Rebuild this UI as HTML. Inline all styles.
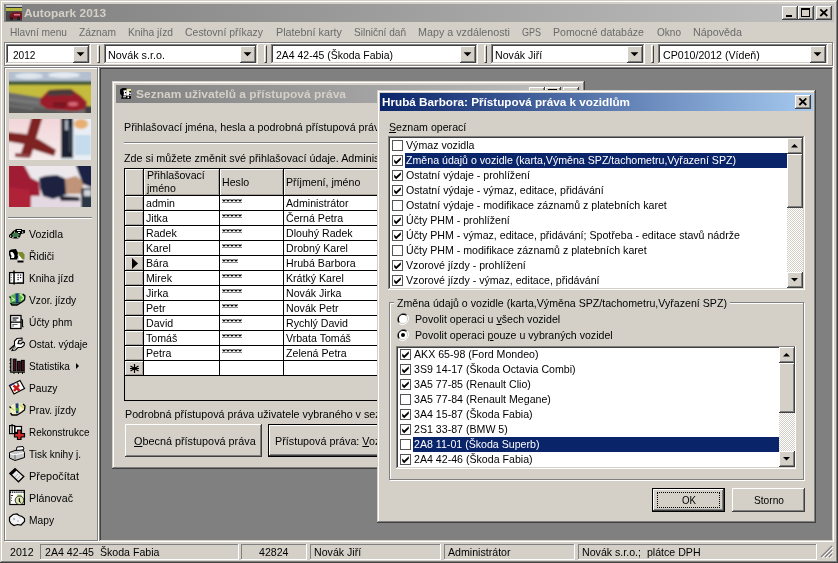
<!DOCTYPE html><html><head><meta charset="utf-8"><style>
*{margin:0;padding:0;box-sizing:border-box}
html,body{width:838px;height:563px;overflow:hidden;background:#d4d0c8}
body{position:relative;font-family:"Liberation Sans", sans-serif;font-size:11px;color:#000}
div,svg{position:absolute}
.t{white-space:pre;line-height:13px;transform-origin:0 0}
.raised{background:#d4d0c8;box-shadow:inset -1px -1px #404040,inset 1px 1px #fff,inset -2px -2px #808080,inset 2px 2px #d4d0c8}
.win{background:#d4d0c8;box-shadow:inset -1px -1px #404040,inset 1px 1px #d4d0c8,inset -2px -2px #808080,inset 2px 2px #fff}
.sunken{box-shadow:inset -1px -1px #fff,inset 1px 1px #808080,inset -2px -2px #d4d0c8,inset 2px 2px #404040}
.thin{box-shadow:inset -1px -1px #fff,inset 1px 1px #808080}
.etch{border:1px solid #808080;box-shadow:1px 1px #fff,inset 1px 1px #fff}
.ul{text-decoration:underline}
</style></head><body><div class="win" style="left:0px;top:0px;width:838px;height:563px;"></div>
<div class="" style="left:4px;top:4px;width:830px;height:18px;background:linear-gradient(to right,#808080,#c0c0c0)"></div>
<svg style="left:6px;top:5px" width="16" height="16"><rect width="16" height="16" fill="#404040"/><rect width="16" height="2" fill="#c4c8d0"/><rect y="2" width="16" height="1" fill="#303030"/><rect y="3" width="16" height="3" fill="#b4b440"/><rect y="6" width="16" height="10" fill="#484848"/><path d="M3 11 L6 7.5 L12 7 L16 8 L16 14 L6 14 L3 13Z" fill="#7a1420"/><rect x="8" y="9" width="6" height="1.5" fill="#d88090"/><rect x="4" y="12" width="3" height="3" fill="#202020"/><rect x="11" y="12" width="3" height="3" fill="#202020"/></svg>
<div class="t" style="left:24px;top:7px;font-size:11px;font-weight:bold;transform:scaleX(1.0816);color:#d4d0c8">Autopark 2013</div>
<div class="raised" style="left:782px;top:6px;width:16px;height:14px;"><svg style="left:0;top:0" width="16" height="14"><rect x="4" y="9" width="6" height="2" fill="#000"/></svg></div>
<div class="raised" style="left:798px;top:6px;width:16px;height:14px;"><svg style="left:0;top:0" width="16" height="14"><rect x="3.5" y="2.5" width="8" height="8" fill="none" stroke="#000"/><rect x="3" y="2" width="9" height="2" fill="#000"/></svg></div>
<div class="raised" style="left:816px;top:6px;width:16px;height:14px;"><svg style="left:0;top:0" width="16" height="14"><path d="M4.3 3.3 L11.3 10 M11.3 3.3 L4.3 10" stroke="#000" stroke-width="1.8"/></svg></div>
<div class="t" style="left:10px;top:26px;font-size:11.5px;transform:scaleX(0.8829);color:#6a6a6a">Hlavní menu</div>
<div class="t" style="left:79px;top:26px;font-size:11.5px;transform:scaleX(0.8906);color:#6a6a6a">Záznam</div>
<div class="t" style="left:128px;top:26px;font-size:11.5px;transform:scaleX(0.8908);color:#6a6a6a">Kniha jízd</div>
<div class="t" style="left:185px;top:26px;font-size:11.5px;transform:scaleX(0.9106);color:#6a6a6a">Cestovní příkazy</div>
<div class="t" style="left:276px;top:26px;font-size:11.5px;transform:scaleX(0.9385);color:#6a6a6a">Platební karty</div>
<div class="t" style="left:354px;top:26px;font-size:11.5px;transform:scaleX(0.8744);color:#6a6a6a">Silniční daň</div>
<div class="t" style="left:418px;top:26px;font-size:11.5px;transform:scaleX(0.9345);color:#6a6a6a">Mapy a vzdálenosti</div>
<div class="t" style="left:522px;top:26px;font-size:11.5px;transform:scaleX(0.7820);color:#6a6a6a">GPS</div>
<div class="t" style="left:553px;top:26px;font-size:11.5px;transform:scaleX(0.9182);color:#6a6a6a">Pomocné databáze</div>
<div class="t" style="left:657px;top:26px;font-size:11.5px;transform:scaleX(0.8727);color:#6a6a6a">Okno</div>
<div class="t" style="left:693px;top:26px;font-size:11.5px;transform:scaleX(0.9344);color:#6a6a6a">Nápověda</div>
<div class="" style="left:4px;top:42px;width:829px;height:24px;border:1px solid #808080;box-shadow:1px 1px #fff,inset 1px 1px #fff"></div>
<div class="sunken" style="left:6px;top:44px;width:85px;height:20px;background:#fff"></div>
<div class="t" style="left:13px;top:49px;font-size:11.5px;transform:scaleX(0.8791);">2012</div>
<div class="raised" style="left:73px;top:46px;width:16px;height:17px;"><svg style="left:0;top:0" width="16" height="16"><path d="M3.6 6.2 H11.4 L7.5 10.2Z" fill="#000"/></svg></div>
<div class="" style="left:97px;top:45px;width:3px;height:18px;border-left:1px solid #fff;border-right:1px solid #404040;border-top:1px solid #fff;border-bottom:1px solid #404040"></div>
<div class="sunken" style="left:104px;top:44px;width:154px;height:20px;background:#fff"></div>
<div class="t" style="left:108px;top:49px;font-size:11.5px;transform:scaleX(0.9388);">Novák s.r.o.</div>
<div class="raised" style="left:240px;top:46px;width:16px;height:17px;"><svg style="left:0;top:0" width="16" height="16"><path d="M3.6 6.2 H11.4 L7.5 10.2Z" fill="#000"/></svg></div>
<div class="" style="left:264px;top:45px;width:3px;height:18px;border-left:1px solid #fff;border-right:1px solid #404040;border-top:1px solid #fff;border-bottom:1px solid #404040"></div>
<div class="sunken" style="left:271px;top:44px;width:207px;height:20px;background:#fff"></div>
<div class="t" style="left:276px;top:49px;font-size:11.5px;transform:scaleX(0.9105);">2A4 42-45 (Škoda Fabia)</div>
<div class="raised" style="left:460px;top:46px;width:16px;height:17px;"><svg style="left:0;top:0" width="16" height="16"><path d="M3.6 6.2 H11.4 L7.5 10.2Z" fill="#000"/></svg></div>
<div class="" style="left:484px;top:45px;width:3px;height:18px;border-left:1px solid #fff;border-right:1px solid #404040;border-top:1px solid #fff;border-bottom:1px solid #404040"></div>
<div class="sunken" style="left:491px;top:44px;width:154px;height:20px;background:#fff"></div>
<div class="t" style="left:495px;top:49px;font-size:11.5px;transform:scaleX(0.9230);">Novák Jiří</div>
<div class="raised" style="left:627px;top:46px;width:16px;height:17px;"><svg style="left:0;top:0" width="16" height="16"><path d="M3.6 6.2 H11.4 L7.5 10.2Z" fill="#000"/></svg></div>
<div class="" style="left:651px;top:45px;width:3px;height:18px;border-left:1px solid #fff;border-right:1px solid #404040;border-top:1px solid #fff;border-bottom:1px solid #404040"></div>
<div class="sunken" style="left:658px;top:44px;width:170px;height:20px;background:#fff"></div>
<div class="t" style="left:663px;top:49px;font-size:11.5px;transform:scaleX(0.9230);">CP010/2012 (Vídeň)</div>
<div class="raised" style="left:810px;top:46px;width:16px;height:17px;"><svg style="left:0;top:0" width="16" height="16"><path d="M3.6 6.2 H11.4 L7.5 10.2Z" fill="#000"/></svg></div>
<div class="etch" style="left:4px;top:67px;width:94px;height:474px;"></div>
<div style="left:9px;top:72px;width:82px;height:41px;overflow:hidden"><svg style="left:0;top:0" width="82" height="41">
<defs><filter id="bl"><feGaussianBlur stdDeviation="0.9"/></filter></defs>
<g filter="url(#bl)"><rect x="-3" y="-3" width="88" height="12" fill="#b4c0d0"/><ellipse cx="20" cy="4" rx="14" ry="3" fill="#dfe6ee"/><ellipse cx="55" cy="3" rx="16" ry="3" fill="#e4eaf0"/>
<rect x="-3" y="9" width="88" height="5" fill="#3c5834"/><rect x="-3" y="13" width="88" height="30" fill="#c4bc3c"/>
<path d="M-3 20 L40 27 L84 36 L84 44 L-3 44Z" fill="#6c6c6c"/><path d="M-3 30 L30 36 L84 44 L-3 44Z" fill="#585858"/>
<path d="M-3 27 L30 31 M-3 33 L25 37" stroke="#8a8a8a" stroke-width="1.2"/><path d="M31 27 L40 18 L62 17 L72 24 L78 30 L77 37 L66 39 L38 37 L31 32Z" fill="#9a1c2a"/><path d="M40 18 L62 17 L66 23 L38 24Z" fill="#4a3a3a"/><ellipse cx="64" cy="32" rx="5" ry="2" fill="#d86878"/><path d="M44 30 L58 30 L56 36 L44 35Z" fill="#7a1420"/><rect x="76" y="34" width="8" height="8" fill="#404040"/></g>
</svg></div>
<div style="left:9px;top:119px;width:82px;height:41px;overflow:hidden"><svg style="left:0;top:0" width="82" height="41">
<defs><linearGradient id="pk" x1="0" y1="0" x2="0" y2="1"><stop offset="0" stop-color="#f2d4d8"/><stop offset="1" stop-color="#f6eeee"/></linearGradient></defs>
<g filter="url(#bl)"><rect x="-3" y="-3" width="56" height="48" fill="url(#pk)"/><rect x="52" y="-3" width="32" height="48" fill="#e8eef4"/>
<path d="M23 -3 L34 -3 L27 20 L22 37 L11 37 L17 19Z" fill="#7e2424"/><path d="M-3 13 L16 15 L25 18 L26 25 L14 25 L-3 22Z" fill="#7e2424"/><path d="M19 18 L29 20 L47 31 L45 37 L20 29Z" fill="#7e2424"/><path d="M6 34 L22 35 L21 39 L6 38Z" fill="#904040"/>
<rect x="52" y="-3" width="13" height="48" fill="#dde4ea"/><rect x="52" y="-3" width="12" height="42" fill="#1c2230"/><rect x="56" y="1" width="3" height="10" fill="#a8b0bc"/><rect x="60" y="8" width="2" height="25" fill="#3a4a58"/>
<ellipse cx="72" cy="5" rx="7" ry="5" fill="#e8b070"/><rect x="66" y="16" width="16" height="20" fill="#c4dcec"/></g>
</svg></div>
<div style="left:9px;top:166px;width:82px;height:41px;overflow:hidden"><svg style="left:0;top:0" width="82" height="41">
<g filter="url(#bl)"><rect x="-3" y="-3" width="88" height="48" fill="#ece8ec"/><path d="M-3 -3 L14 -3 L22 12 L30 16 L32 44 L-3 44Z" fill="#a01a34"/><path d="M-3 20 L20 24 L22 44 L-3 44Z" fill="#b02038"/>
<path d="M22 30 L70 30 L70 44 L22 44Z" fill="#e4d8e2"/>
<path d="M30 12 L36 10 L48 9 L57 13 L59 28 L44 33 L34 30 L31 22Z" fill="#1a2040"/><path d="M50 30 L70 31 L71 35 L52 35Z" fill="#202030"/>
<path d="M56 13 L67 10 L75 16 L72 28 L57 28Z" fill="#c09478"/><path d="M66 -3 L84 -3 L84 22 L74 18 L70 8Z" fill="#1c2444"/><rect x="72" y="22" width="12" height="22" fill="#2c3444"/><rect x="75" y="24" width="7" height="6" fill="#d0d4dc"/></g>
</svg></div>
<div class="" style="left:8px;top:217px;width:84px;height:2px;border-top:1px solid #808080;border-bottom:1px solid #fff"></div>
<div class="t" style="left:29px;top:228px;font-size:11.5px;transform:scaleX(0.9166);">Vozidla</div>
<svg style="left:6px;top:224px" width="22" height="22" viewBox="0 0 22 22"><path d="M3 11 L5 9.5 L7 7 L9 6 L10 5 L16 5 L16 6 L19 6 L19 9 L15 10 L14 13 L12 14.5 L8 14.5 L5 14 L3 13Z" fill="#000"/>
<path d="M6 10.5 L8 8.5 L11 8.5 L13 10 L12 13 L7 13Z" fill="#3e7a4c"/><rect x="11" y="6" width="4" height="1" fill="#fff"/><rect x="12" y="8" width="2" height="1" fill="#fff"/><rect x="4" y="11.5" width="1.2" height="1.2" fill="#fff"/><rect x="6.3" y="12.8" width="1.2" height="1.2" fill="#fff"/><rect x="11.3" y="12.8" width="1.2" height="1.2" fill="#fff"/><rect x="16" y="7.5" width="1.2" height="1.2" fill="#fff"/><rect x="8" y="7.6" width="1" height="1" fill="#fff"/><rect x="12.5" y="10.5" width="1" height="1" fill="#9fd0a0"/></svg>
<div class="t" style="left:29px;top:250px;font-size:11.5px;transform:scaleX(0.8900);">Řidiči</div>
<svg style="left:6px;top:246px" width="22" height="22" viewBox="0 0 22 22"><path d="M3 5 L5 3.5 L10 3 L11 5 L12 7 L11.5 9 L12 11 L11 13.5 L4 13.5 L4 11 L3 9Z" fill="#000"/>
<path d="M4.5 6 L6.5 6 L8 8 L8.5 10 L8 12 L5 12 L5.5 10 L4.5 8Z" fill="#fff"/>
<path d="M12 6 L16.5 6 L18.5 8.5 L18.5 13.5 L16 13 L13 9Z" fill="#7c8a2c"/><path d="M13 9.5 L16 13 L17 15 L12 15 L13 12Z" fill="#fff"/><rect x="11.5" y="14.5" width="6" height="2" fill="#000"/></svg>
<div class="t" style="left:29px;top:272px;font-size:11.5px;transform:scaleX(0.8908);">Kniha jízd</div>
<svg style="left:6px;top:268px" width="22" height="22" viewBox="0 0 22 22"><rect x="3.6" y="4.6" width="13.8" height="10.6" fill="#fff" stroke="#000" stroke-width="1.3"/><rect x="7.3" y="2.5" width="1.5" height="14" fill="#000"/>
<rect x="11.5" y="6.5" width="1.2" height="1.2" fill="#000"/><rect x="14" y="6.5" width="1.2" height="1.2" fill="#000"/><rect x="11.5" y="9" width="1.2" height="1.2" fill="#000"/><rect x="14" y="9" width="1.2" height="1.2" fill="#000"/><rect x="11.5" y="11" width="1.2" height="1.2" fill="#000"/><rect x="11" y="14" width="6" height="1" fill="#444"/><path d="M4.5 7 H6 M4.5 9.5 H6 M4.5 12 H6" stroke="#888"/></svg>
<div class="t" style="left:29px;top:294px;font-size:11.5px;transform:scaleX(0.8900);">Vzor. jízdy</div>
<svg style="left:6px;top:290px" width="22" height="22" viewBox="0 0 22 22"><path d="M3.5 6.5 L6 5 L9 3.5 L13 3 L17 4 L19 6 L18.5 10 L16 12 L11 15 L6 15 L4.5 13 L4 9Z" fill="#58b048"/><path d="M4 6.5 L8.5 9.5 L6 11 M14 4 L18 8 L15 10" stroke="#c8f0b0" stroke-width="1.3" fill="none"/><path d="M9.5 3.5 L12.5 3.2 L12.5 13 L10 13.5Z" fill="#1a3a8a"/><path d="M17 4 L19 6 L18.5 10 L16 12 L11 15 L6 15 L4.5 13 M3.5 6.5 L5 8" stroke="#000" stroke-width="1.3" fill="none"/><path d="M6 13 L14 12.5" stroke="#1a2a5a" stroke-width="1.2"/></svg>
<div class="t" style="left:29px;top:316px;font-size:11.5px;transform:scaleX(0.8900);">Účty phm</div>
<svg style="left:6px;top:312px" width="22" height="22" viewBox="0 0 22 22"><rect x="4.6" y="3.5" width="10.4" height="13" fill="#fff" stroke="#000" stroke-width="1.3"/><rect x="4" y="9.5" width="11.5" height="1.3" fill="#000"/><rect x="6.5" y="5.5" width="6" height="1.1" fill="#000"/><rect x="6.5" y="7.5" width="4" height="1" fill="#000"/><rect x="6.5" y="12" width="5" height="1" fill="#666"/><rect x="6.5" y="12" width="1" height="3" fill="#666"/><path d="M15 7 L16.5 8 L16.5 14.5 L17.5 15" stroke="#000" stroke-width="1.1" fill="none"/></svg>
<div class="t" style="left:29px;top:338px;font-size:11.5px;transform:scaleX(0.8730);">Ostat. výdaje</div>
<svg style="left:6px;top:334px" width="22" height="22" viewBox="0 0 22 22"><path d="M11 4.5 L16 4 L16 6 L13 6.5 L12 9.5 L15 10 L17 8 L18.5 9 L18 11.5 L15.5 13.5 L12 13.5 L9.5 16 L6 16.5 L8.5 12 L8.5 7 Z" fill="#fff" stroke="#000" stroke-width="1.1"/><path d="M3.5 15.5 L8.5 11" stroke="#000" stroke-width="1.2"/><path d="M7 15.5 L10 12.5" stroke="#999" stroke-width="2"/></svg>
<div class="t" style="left:29px;top:360px;font-size:11.5px;transform:scaleX(0.8785);">Statistika</div>
<svg style="left:6px;top:356px" width="22" height="22" viewBox="0 0 22 22"><path d="M4.8 2 V16.2 H19" stroke="#000" stroke-width="1.3" fill="none"/><path d="M3.5 4 H5 M3.5 7.5 H5 M3.5 11 H5 M3.5 14.5 H5 M8 16 V18 M12.5 16 V18 M16.5 16 V18" stroke="#000" stroke-width="0.9"/>
<rect x="7.2" y="3.2" width="2.8" height="11.6" fill="#4a1020" stroke="#000" stroke-width="1.1"/><rect x="11.4" y="5.4" width="2.8" height="9.4" fill="#4a1020" stroke="#000" stroke-width="1.1"/><rect x="15.4" y="4.4" width="2.8" height="10.4" fill="#4a1020" stroke="#000" stroke-width="1.1"/></svg>
<div class="t" style="left:29px;top:382px;font-size:11.5px;transform:scaleX(0.8900);">Pauzy</div>
<svg style="left:6px;top:378px" width="22" height="22" viewBox="0 0 22 22"><path d="M3.5 7.5 L14 2.5 L18.5 10.5 L8 16Z" fill="#fff" stroke="#000" stroke-width="1.2"/><path d="M7.5 7.5 L13.5 12.5 M13 7 L8 13" stroke="#c81818" stroke-width="2.6"/><path d="M4 7.5 L8 5.5" stroke="#302070" stroke-width="1.5"/><path d="M11 4.5 L12.5 7" stroke="#6a4020" stroke-width="1.5"/></svg>
<div class="t" style="left:29px;top:404px;font-size:11.5px;transform:scaleX(0.8900);">Prav. jízdy</div>
<svg style="left:6px;top:400px" width="22" height="22" viewBox="0 0 22 22"><path d="M3.5 6.5 L6 5 L9 3.5 L13 3 L17 4 L19 6 L18.5 10 L16 12 L11 15 L6 15 L4.5 13 L4 9Z" fill="#f0f0c0"/><path d="M4 7 L8 10 M13.5 4.5 L17.5 8" stroke="#c8d060" stroke-width="1.3" fill="none"/><path d="M9.5 3.5 L12.5 3.2 L12.5 13 L10 13.5Z" fill="#1a3a7a"/><rect x="10" y="8" width="2.5" height="3" fill="#3a9a2a"/><path d="M17 4 L19 6 L18.5 10 L16 12 L11 15 L6 15 L4.5 13 M3.5 6.5 L5 8" stroke="#000" stroke-width="1.3" fill="none"/></svg>
<div class="t" style="left:29px;top:426px;font-size:11.5px;transform:scaleX(0.8604);">Rekonstrukce</div>
<svg style="left:6px;top:422px" width="22" height="22" viewBox="0 0 22 22"><rect x="3.6" y="3.6" width="5" height="8" fill="#fff" stroke="#000" stroke-width="1.2"/><rect x="5.5" y="2" width="1.2" height="10" fill="#000"/><rect x="9" y="4.5" width="6.5" height="6" fill="#fff" stroke="#000" stroke-width="1.2"/>
<path d="M11.5 8 H15 V11.5 H18.5 V15 H15 V17.5 H11.5 V15 H8.5 V11.5 H11.5Z" fill="#d02828" stroke="#000" stroke-width="1.2"/></svg>
<div class="t" style="left:29px;top:448px;font-size:11.5px;transform:scaleX(0.8719);">Tisk knihy j.</div>
<svg style="left:6px;top:444px" width="22" height="22" viewBox="0 0 22 22"><path d="M11 3 L17 2.5 L18 5 L14 8 L10 7Z" fill="#fff" stroke="#000" stroke-width="1"/><path d="M3.5 8.5 L9 6.5 L17 6 L18.5 8.5 L18.5 13.5 L9 16.5 L3.5 14Z" fill="#c8c8c8" stroke="#000" stroke-width="1"/><path d="M4 9.5 L9 11 L18 8.5" stroke="#fff" stroke-width="1.2" fill="none"/><path d="M9 11 V16" stroke="#666"/></svg>
<div class="t" style="left:29px;top:470px;font-size:11.5px;transform:scaleX(0.9538);">Přepočítat</div>
<svg style="left:6px;top:466px" width="22" height="22" viewBox="0 0 22 22"><path d="M3.8 7.5 L9 2.6 L17.8 10.5 L12.5 15.8Z" fill="#e8e8e8" stroke="#000" stroke-width="1.3"/><path d="M3.8 7.5 L9 2.6 L10.8 4.3 L5.6 9.2Z" fill="#000"/><path d="M9 11 L12 8 M11 13 L14 10" stroke="#aaa" stroke-width="0.8"/></svg>
<div class="t" style="left:29px;top:492px;font-size:11.5px;transform:scaleX(0.9300);">Plánovač</div>
<svg style="left:6px;top:488px" width="22" height="22" viewBox="0 0 22 22"><rect x="3.8" y="2.5" width="14.6" height="14" fill="#fff" stroke="#000" stroke-width="1.2"/><path d="M4 3 H18 M4 4.5 H18" stroke="#000" stroke-width="0.9" stroke-dasharray="1.2 0.9"/><rect x="5" y="7" width="2" height="1" fill="#502020"/><rect x="5" y="9.5" width="1" height="1" fill="#553"/><rect x="5" y="12" width="1" height="1" fill="#553"/>
<circle cx="13.5" cy="12.3" r="4.3" fill="#e0e8b8" stroke="#000" stroke-width="0.8"/><path d="M11.5 7.5 L15.5 7.5" stroke="#7a9a40" stroke-width="1.6"/><path d="M13.3 10 V13.5 L14.5 14.5" stroke="#000" stroke-width="1"/></svg>
<div class="t" style="left:29px;top:514px;font-size:11.5px;transform:scaleX(0.8889);">Mapy</div>
<svg style="left:6px;top:510px" width="22" height="22" viewBox="0 0 22 22"><path d="M3.5 7.5 L7 4.5 L11 4 L13 5.5 L16 6.5 L18.5 8.5 L18.5 11.5 L15 15 L11.5 14.5 L8 15.5 L5 13.5 L3.5 11Z" fill="#f4f4f4" stroke="#000" stroke-width="1.2"/><circle cx="8" cy="9" r="1.2" fill="#b8c0c8"/><circle cx="12" cy="11" r="1" fill="#c8c8c8"/><circle cx="14" cy="8" r="0.8" fill="#ccc"/></svg>
<svg style="left:75px;top:362px" width="5" height="8"><path d="M1 1 L4 4 L1 7Z" fill="#000"/></svg>
<div class="" style="left:99px;top:67px;width:735px;height:475px;background:#808080;box-shadow:inset -1px -1px #fff,inset 1px 1px #808080,inset -2px -2px #d4d0c8,inset 2px 2px #404040"></div>
<div class="win" style="left:112px;top:81px;width:473px;height:388px;"></div>
<div class="" style="left:116px;top:85px;width:465px;height:18px;background:linear-gradient(to right,#808080,#c0c0c0)"></div>
<svg style="left:116px;top:85px" width="20" height="18"><path d="M4.5 4 L7 3 L10.5 3.2 L11 5 L10.5 10.5 L15 10.5 L15 13.7 L5 13.7 L6 11 L4.2 9 L4 6Z" fill="#000"/><path d="M7.3 5.5 L10.5 5 L10.5 10.5 L7.5 10.5 L8 8Z" fill="#fff"/><rect x="10.5" y="4" width="4.5" height="3" fill="#e8e8a0"/><rect x="10.5" y="6.5" width="4.5" height="4" fill="#fff"/><rect x="13.3" y="6" width="1.7" height="1.5" fill="#000"/><rect x="13" y="8.8" width="1.6" height="1.3" fill="#000"/><rect x="9" y="7" width="1.2" height="1.2" fill="#000"/><rect x="7" y="11.3" width="3" height="1" fill="#fff"/><rect x="11.5" y="11.5" width="1.5" height="1.5" fill="#fff"/></svg>
<div class="t" style="left:136px;top:88px;font-size:11px;font-weight:bold;transform:scaleX(1.0905);color:#d4d0c8">Seznam uživatelů a přístupová práva</div>
<div class="raised" style="left:529px;top:87px;width:16px;height:14px;"></div>
<div class="raised" style="left:545px;top:87px;width:16px;height:14px;"></div>
<div class="raised" style="left:563px;top:87px;width:16px;height:14px;"></div>
<div class="" style="left:548px;top:89px;width:9px;height:2px;background:#000"></div>
<div class="t" style="left:124px;top:121px;font-size:11.5px;transform:scaleX(0.9290);">Přihlašovací jména, hesla a podrobná přístupová práva</div>
<div class="" style="left:124px;top:142px;width:460px;height:2px;border-top:1px solid #808080;border-bottom:1px solid #fff"></div>
<div class="t" style="left:124px;top:152px;font-size:11.5px;transform:scaleX(0.9360);">Zde si můžete změnit své přihlašovací údaje. Administrátor</div>
<div class="" style="left:124px;top:168px;width:460px;height:233px;background:#d4d0c8;border:1px solid #000;border-right:none"></div>
<div class="" style="left:144px;top:195px;width:440px;height:15px;background:#fff"></div>
<div class="t" style="left:146px;top:197px;font-size:11.5px;transform:scaleX(0.9230);">admin</div>
<svg style="left:222px;top:199px" width="22" height="5"><path d="M0.5 0.5 L3.5 3.5 M3.5 0.5 L0.5 3.5 M4.5 0.5 L7.5 3.5 M7.5 0.5 L4.5 3.5 M8.5 0.5 L11.5 3.5 M11.5 0.5 L8.5 3.5 M12.5 0.5 L15.5 3.5 M15.5 0.5 L12.5 3.5 M16.5 0.5 L19.5 3.5 M19.5 0.5 L16.5 3.5 " stroke="#000" stroke-width="1.1"/></svg>
<div class="t" style="left:286px;top:197px;font-size:11.5px;transform:scaleX(0.9230);">Administrátor</div>
<div class="" style="left:144px;top:210px;width:440px;height:15px;background:#fff"></div>
<div class="t" style="left:146px;top:212px;font-size:11.5px;transform:scaleX(0.9230);">Jitka</div>
<svg style="left:222px;top:214px" width="22" height="5"><path d="M0.5 0.5 L3.5 3.5 M3.5 0.5 L0.5 3.5 M4.5 0.5 L7.5 3.5 M7.5 0.5 L4.5 3.5 M8.5 0.5 L11.5 3.5 M11.5 0.5 L8.5 3.5 M12.5 0.5 L15.5 3.5 M15.5 0.5 L12.5 3.5 M16.5 0.5 L19.5 3.5 M19.5 0.5 L16.5 3.5 " stroke="#000" stroke-width="1.1"/></svg>
<div class="t" style="left:286px;top:212px;font-size:11.5px;transform:scaleX(0.9230);">Černá Petra</div>
<div class="" style="left:144px;top:225px;width:440px;height:15px;background:#fff"></div>
<div class="t" style="left:146px;top:227px;font-size:11.5px;transform:scaleX(0.9230);">Radek</div>
<svg style="left:222px;top:229px" width="22" height="5"><path d="M0.5 0.5 L3.5 3.5 M3.5 0.5 L0.5 3.5 M4.5 0.5 L7.5 3.5 M7.5 0.5 L4.5 3.5 M8.5 0.5 L11.5 3.5 M11.5 0.5 L8.5 3.5 M12.5 0.5 L15.5 3.5 M15.5 0.5 L12.5 3.5 M16.5 0.5 L19.5 3.5 M19.5 0.5 L16.5 3.5 " stroke="#000" stroke-width="1.1"/></svg>
<div class="t" style="left:286px;top:227px;font-size:11.5px;transform:scaleX(0.9230);">Dlouhý Radek</div>
<div class="" style="left:144px;top:240px;width:440px;height:15px;background:#fff"></div>
<div class="t" style="left:146px;top:242px;font-size:11.5px;transform:scaleX(0.9230);">Karel</div>
<svg style="left:222px;top:244px" width="22" height="5"><path d="M0.5 0.5 L3.5 3.5 M3.5 0.5 L0.5 3.5 M4.5 0.5 L7.5 3.5 M7.5 0.5 L4.5 3.5 M8.5 0.5 L11.5 3.5 M11.5 0.5 L8.5 3.5 M12.5 0.5 L15.5 3.5 M15.5 0.5 L12.5 3.5 M16.5 0.5 L19.5 3.5 M19.5 0.5 L16.5 3.5 " stroke="#000" stroke-width="1.1"/></svg>
<div class="t" style="left:286px;top:242px;font-size:11.5px;transform:scaleX(0.9230);">Drobný Karel</div>
<div class="" style="left:144px;top:255px;width:440px;height:15px;background:#fff"></div>
<div class="t" style="left:146px;top:257px;font-size:11.5px;transform:scaleX(0.9230);">Bára</div>
<svg style="left:222px;top:259px" width="22" height="5"><path d="M0.5 0.5 L3.5 3.5 M3.5 0.5 L0.5 3.5 M4.5 0.5 L7.5 3.5 M7.5 0.5 L4.5 3.5 M8.5 0.5 L11.5 3.5 M11.5 0.5 L8.5 3.5 M12.5 0.5 L15.5 3.5 M15.5 0.5 L12.5 3.5 " stroke="#000" stroke-width="1.1"/></svg>
<div class="t" style="left:286px;top:257px;font-size:11.5px;transform:scaleX(0.9230);">Hrubá Barbora</div>
<div class="" style="left:144px;top:270px;width:440px;height:15px;background:#fff"></div>
<div class="t" style="left:146px;top:272px;font-size:11.5px;transform:scaleX(0.9230);">Mirek</div>
<svg style="left:222px;top:274px" width="22" height="5"><path d="M0.5 0.5 L3.5 3.5 M3.5 0.5 L0.5 3.5 M4.5 0.5 L7.5 3.5 M7.5 0.5 L4.5 3.5 M8.5 0.5 L11.5 3.5 M11.5 0.5 L8.5 3.5 M12.5 0.5 L15.5 3.5 M15.5 0.5 L12.5 3.5 M16.5 0.5 L19.5 3.5 M19.5 0.5 L16.5 3.5 " stroke="#000" stroke-width="1.1"/></svg>
<div class="t" style="left:286px;top:272px;font-size:11.5px;transform:scaleX(0.9230);">Krátký Karel</div>
<div class="" style="left:144px;top:285px;width:440px;height:15px;background:#fff"></div>
<div class="t" style="left:146px;top:287px;font-size:11.5px;transform:scaleX(0.9230);">Jirka</div>
<svg style="left:222px;top:289px" width="22" height="5"><path d="M0.5 0.5 L3.5 3.5 M3.5 0.5 L0.5 3.5 M4.5 0.5 L7.5 3.5 M7.5 0.5 L4.5 3.5 M8.5 0.5 L11.5 3.5 M11.5 0.5 L8.5 3.5 M12.5 0.5 L15.5 3.5 M15.5 0.5 L12.5 3.5 M16.5 0.5 L19.5 3.5 M19.5 0.5 L16.5 3.5 " stroke="#000" stroke-width="1.1"/></svg>
<div class="t" style="left:286px;top:287px;font-size:11.5px;transform:scaleX(0.9230);">Novák Jirka</div>
<div class="" style="left:144px;top:300px;width:440px;height:15px;background:#fff"></div>
<div class="t" style="left:146px;top:302px;font-size:11.5px;transform:scaleX(0.9230);">Petr</div>
<svg style="left:222px;top:304px" width="22" height="5"><path d="M0.5 0.5 L3.5 3.5 M3.5 0.5 L0.5 3.5 M4.5 0.5 L7.5 3.5 M7.5 0.5 L4.5 3.5 M8.5 0.5 L11.5 3.5 M11.5 0.5 L8.5 3.5 M12.5 0.5 L15.5 3.5 M15.5 0.5 L12.5 3.5 " stroke="#000" stroke-width="1.1"/></svg>
<div class="t" style="left:286px;top:302px;font-size:11.5px;transform:scaleX(0.9230);">Novák Petr</div>
<div class="" style="left:144px;top:315px;width:440px;height:15px;background:#fff"></div>
<div class="t" style="left:146px;top:317px;font-size:11.5px;transform:scaleX(0.9230);">David</div>
<svg style="left:222px;top:319px" width="22" height="5"><path d="M0.5 0.5 L3.5 3.5 M3.5 0.5 L0.5 3.5 M4.5 0.5 L7.5 3.5 M7.5 0.5 L4.5 3.5 M8.5 0.5 L11.5 3.5 M11.5 0.5 L8.5 3.5 M12.5 0.5 L15.5 3.5 M15.5 0.5 L12.5 3.5 M16.5 0.5 L19.5 3.5 M19.5 0.5 L16.5 3.5 " stroke="#000" stroke-width="1.1"/></svg>
<div class="t" style="left:286px;top:317px;font-size:11.5px;transform:scaleX(0.9230);">Rychlý David</div>
<div class="" style="left:144px;top:330px;width:440px;height:15px;background:#fff"></div>
<div class="t" style="left:146px;top:332px;font-size:11.5px;transform:scaleX(0.9230);">Tomáš</div>
<svg style="left:222px;top:334px" width="22" height="5"><path d="M0.5 0.5 L3.5 3.5 M3.5 0.5 L0.5 3.5 M4.5 0.5 L7.5 3.5 M7.5 0.5 L4.5 3.5 M8.5 0.5 L11.5 3.5 M11.5 0.5 L8.5 3.5 M12.5 0.5 L15.5 3.5 M15.5 0.5 L12.5 3.5 M16.5 0.5 L19.5 3.5 M19.5 0.5 L16.5 3.5 " stroke="#000" stroke-width="1.1"/></svg>
<div class="t" style="left:286px;top:332px;font-size:11.5px;transform:scaleX(0.9230);">Vrbata Tomáš</div>
<div class="" style="left:144px;top:345px;width:440px;height:15px;background:#fff"></div>
<div class="t" style="left:146px;top:347px;font-size:11.5px;transform:scaleX(0.9230);">Petra</div>
<svg style="left:222px;top:349px" width="22" height="5"><path d="M0.5 0.5 L3.5 3.5 M3.5 0.5 L0.5 3.5 M4.5 0.5 L7.5 3.5 M7.5 0.5 L4.5 3.5 M8.5 0.5 L11.5 3.5 M11.5 0.5 L8.5 3.5 M12.5 0.5 L15.5 3.5 M15.5 0.5 L12.5 3.5 M16.5 0.5 L19.5 3.5 M19.5 0.5 L16.5 3.5 " stroke="#000" stroke-width="1.1"/></svg>
<div class="t" style="left:286px;top:347px;font-size:11.5px;transform:scaleX(0.9230);">Zelená Petra</div>
<div class="" style="left:144px;top:360px;width:440px;height:15px;background:#fff"></div>
<div class="" style="left:124px;top:195px;width:460px;height:1px;background:#000"></div>
<div class="" style="left:124px;top:210px;width:460px;height:1px;background:#000"></div>
<div class="" style="left:124px;top:225px;width:460px;height:1px;background:#000"></div>
<div class="" style="left:124px;top:240px;width:460px;height:1px;background:#000"></div>
<div class="" style="left:124px;top:255px;width:460px;height:1px;background:#000"></div>
<div class="" style="left:124px;top:270px;width:460px;height:1px;background:#000"></div>
<div class="" style="left:124px;top:285px;width:460px;height:1px;background:#000"></div>
<div class="" style="left:124px;top:300px;width:460px;height:1px;background:#000"></div>
<div class="" style="left:124px;top:315px;width:460px;height:1px;background:#000"></div>
<div class="" style="left:124px;top:330px;width:460px;height:1px;background:#000"></div>
<div class="" style="left:124px;top:345px;width:460px;height:1px;background:#000"></div>
<div class="" style="left:124px;top:360px;width:460px;height:1px;background:#000"></div>
<div class="" style="left:124px;top:375px;width:460px;height:1px;background:#000"></div>
<div class="" style="left:124px;top:168px;width:1px;height:208px;background:#000"></div>
<div class="" style="left:143px;top:168px;width:1px;height:208px;background:#000"></div>
<div class="" style="left:219px;top:168px;width:1px;height:208px;background:#000"></div>
<div class="" style="left:283px;top:168px;width:1px;height:208px;background:#000"></div>
<div class="" style="left:125px;top:169px;width:18px;height:26px;border-left:1px solid #fff;border-top:1px solid #fff;box-shadow:inset -1px -1px #a8a49c"></div>
<div class="" style="left:144px;top:169px;width:75px;height:26px;border-left:1px solid #fff;border-top:1px solid #fff;box-shadow:inset -1px -1px #a8a49c"></div>
<div class="" style="left:220px;top:169px;width:63px;height:26px;border-left:1px solid #fff;border-top:1px solid #fff;box-shadow:inset -1px -1px #a8a49c"></div>
<div class="" style="left:284px;top:169px;width:300px;height:26px;border-left:1px solid #fff;border-top:1px solid #fff;box-shadow:inset -1px -1px #a8a49c"></div>
<div class="" style="left:125px;top:196px;width:18px;height:14px;border-left:1px solid #fff;border-top:1px solid #fff;box-shadow:inset -1px -1px #a8a49c"></div>
<div class="" style="left:125px;top:211px;width:18px;height:14px;border-left:1px solid #fff;border-top:1px solid #fff;box-shadow:inset -1px -1px #a8a49c"></div>
<div class="" style="left:125px;top:226px;width:18px;height:14px;border-left:1px solid #fff;border-top:1px solid #fff;box-shadow:inset -1px -1px #a8a49c"></div>
<div class="" style="left:125px;top:241px;width:18px;height:14px;border-left:1px solid #fff;border-top:1px solid #fff;box-shadow:inset -1px -1px #a8a49c"></div>
<div class="" style="left:125px;top:256px;width:18px;height:14px;border-left:1px solid #fff;border-top:1px solid #fff;box-shadow:inset -1px -1px #a8a49c"></div>
<div class="" style="left:125px;top:271px;width:18px;height:14px;border-left:1px solid #fff;border-top:1px solid #fff;box-shadow:inset -1px -1px #a8a49c"></div>
<div class="" style="left:125px;top:286px;width:18px;height:14px;border-left:1px solid #fff;border-top:1px solid #fff;box-shadow:inset -1px -1px #a8a49c"></div>
<div class="" style="left:125px;top:301px;width:18px;height:14px;border-left:1px solid #fff;border-top:1px solid #fff;box-shadow:inset -1px -1px #a8a49c"></div>
<div class="" style="left:125px;top:316px;width:18px;height:14px;border-left:1px solid #fff;border-top:1px solid #fff;box-shadow:inset -1px -1px #a8a49c"></div>
<div class="" style="left:125px;top:331px;width:18px;height:14px;border-left:1px solid #fff;border-top:1px solid #fff;box-shadow:inset -1px -1px #a8a49c"></div>
<div class="" style="left:125px;top:346px;width:18px;height:14px;border-left:1px solid #fff;border-top:1px solid #fff;box-shadow:inset -1px -1px #a8a49c"></div>
<div class="" style="left:125px;top:361px;width:18px;height:14px;border-left:1px solid #fff;border-top:1px solid #fff;box-shadow:inset -1px -1px #a8a49c"></div>
<div class="t" style="left:147px;top:169px;font-size:11.5px;transform:scaleX(0.9230);">Přihlašovací</div>
<div class="t" style="left:147px;top:182px;font-size:11.5px;transform:scaleX(0.9230);">jméno</div>
<div class="t" style="left:222px;top:176px;font-size:11.5px;transform:scaleX(0.9230);">Heslo</div>
<div class="t" style="left:286px;top:176px;font-size:11.5px;transform:scaleX(0.9230);">Příjmení, jméno</div>
<svg style="left:131px;top:257px" width="9" height="13"><path d="M1 1 L7 6.5 L1 12Z" fill="#000"/></svg>
<svg style="left:129px;top:363px" width="11" height="11"><path d="M5.5 1 V10 M1.5 3 L9.5 8 M9.5 3 L1.5 8 M1 5.5 H10" stroke="#000" stroke-width="1.2"/><circle cx="5.5" cy="5.5" r="1.3" fill="#000"/></svg>
<div class="t" style="left:125px;top:408px;font-size:11.5px;transform:scaleX(0.9320);">Podrobná přístupová práva uživatele vybraného v seznamu</div>
<div class="raised" style="left:125px;top:424px;width:137px;height:33px;"></div>
<div class="t" style="left:134px;top:435px;font-size:11.5px;transform:scaleX(0.9423);"><span class="ul">O</span>becná přístupová práva</div>
<div class="" style="left:268px;top:424px;width:120px;height:33px;background:#000"></div>
<div class="raised" style="left:269px;top:425px;width:118px;height:31px;"></div>
<div class="t" style="left:275px;top:435px;font-size:11.5px;transform:scaleX(0.9360);">Přístupová práva: <span class="ul">V</span>ozidla</div>
<div class="win" style="left:377px;top:90px;width:439px;height:433px;"></div>
<div class="" style="left:380px;top:93px;width:433px;height:18px;background:linear-gradient(to right,#0a246a,#a6caf0)"></div>
<div class="t" style="left:382px;top:96px;font-size:11px;font-weight:bold;transform:scaleX(1.0649);color:#fff">Hrubá Barbora: Přístupová práva k vozidlům</div>
<div class="raised" style="left:795px;top:95px;width:16px;height:14px;"><svg style="left:0;top:0" width="16" height="14"><path d="M4.3 3.3 L11.3 10 M11.3 3.3 L4.3 10" stroke="#000" stroke-width="1.8"/></svg></div>
<div class="t" style="left:389px;top:121px;font-size:11.5px;transform:scaleX(0.9230);"><span class="ul">S</span>eznam operací</div>
<div class="sunken" style="left:388px;top:136px;width:417px;height:154px;background:#fff"></div>
<div class="" style="left:392px;top:140px;width:11px;height:11px;background:#fff;border:1px solid #555"></div>
<div class="t" style="left:406px;top:139px;font-size:11.5px;transform:scaleX(0.9230);">Výmaz vozidla</div>
<div class="" style="left:405px;top:153px;width:382px;height:15px;background:#0a246a"></div>
<div class="" style="left:392px;top:155px;width:11px;height:11px;background:#fff;border:1px solid #555"><svg style="left:-1px;top:-1px" width="11" height="11"><path d="M2.2 4.6 L4.2 6.6 L8.8 2.2 L8.8 4.8 L4.2 9.2 L2.2 7.2Z" fill="#000"/></svg></div>
<div class="t" style="left:406px;top:154px;font-size:11.5px;transform:scaleX(0.9230);color:#fff">Změna údajů o vozidle (karta,Výměna SPZ/tachometru,Vyřazení SPZ)</div>
<div class="" style="left:392px;top:170px;width:11px;height:11px;background:#fff;border:1px solid #555"><svg style="left:-1px;top:-1px" width="11" height="11"><path d="M2.2 4.6 L4.2 6.6 L8.8 2.2 L8.8 4.8 L4.2 9.2 L2.2 7.2Z" fill="#000"/></svg></div>
<div class="t" style="left:406px;top:169px;font-size:11.5px;transform:scaleX(0.9230);">Ostatní výdaje - prohlížení</div>
<div class="" style="left:392px;top:185px;width:11px;height:11px;background:#fff;border:1px solid #555"><svg style="left:-1px;top:-1px" width="11" height="11"><path d="M2.2 4.6 L4.2 6.6 L8.8 2.2 L8.8 4.8 L4.2 9.2 L2.2 7.2Z" fill="#000"/></svg></div>
<div class="t" style="left:406px;top:184px;font-size:11.5px;transform:scaleX(0.9230);">Ostatní výdaje - výmaz, editace, přidávání</div>
<div class="" style="left:392px;top:200px;width:11px;height:11px;background:#fff;border:1px solid #555"></div>
<div class="t" style="left:406px;top:199px;font-size:11.5px;transform:scaleX(0.9230);">Ostatní výdaje - modifikace záznamů z platebních karet</div>
<div class="" style="left:392px;top:215px;width:11px;height:11px;background:#fff;border:1px solid #555"><svg style="left:-1px;top:-1px" width="11" height="11"><path d="M2.2 4.6 L4.2 6.6 L8.8 2.2 L8.8 4.8 L4.2 9.2 L2.2 7.2Z" fill="#000"/></svg></div>
<div class="t" style="left:406px;top:214px;font-size:11.5px;transform:scaleX(0.9230);">Účty PHM - prohlížení</div>
<div class="" style="left:392px;top:230px;width:11px;height:11px;background:#fff;border:1px solid #555"><svg style="left:-1px;top:-1px" width="11" height="11"><path d="M2.2 4.6 L4.2 6.6 L8.8 2.2 L8.8 4.8 L4.2 9.2 L2.2 7.2Z" fill="#000"/></svg></div>
<div class="t" style="left:406px;top:229px;font-size:11.5px;transform:scaleX(0.9230);">Účty PHM - výmaz, editace, přidávání; Spotřeba - editace stavů nádrže</div>
<div class="" style="left:392px;top:245px;width:11px;height:11px;background:#fff;border:1px solid #555"></div>
<div class="t" style="left:406px;top:244px;font-size:11.5px;transform:scaleX(0.9230);">Účty PHM - modifikace záznamů z platebních karet</div>
<div class="" style="left:392px;top:260px;width:11px;height:11px;background:#fff;border:1px solid #555"><svg style="left:-1px;top:-1px" width="11" height="11"><path d="M2.2 4.6 L4.2 6.6 L8.8 2.2 L8.8 4.8 L4.2 9.2 L2.2 7.2Z" fill="#000"/></svg></div>
<div class="t" style="left:406px;top:259px;font-size:11.5px;transform:scaleX(0.9230);">Vzorové jízdy - prohlížení</div>
<div class="" style="left:392px;top:275px;width:11px;height:11px;background:#fff;border:1px solid #555"><svg style="left:-1px;top:-1px" width="11" height="11"><path d="M2.2 4.6 L4.2 6.6 L8.8 2.2 L8.8 4.8 L4.2 9.2 L2.2 7.2Z" fill="#000"/></svg></div>
<div class="t" style="left:406px;top:274px;font-size:11.5px;transform:scaleX(0.9230);">Vzorové jízdy - výmaz, editace, přidávání</div>
<div class="" style="left:787px;top:138px;width:16px;height:150px;background-color:#e8e6e2;background-image:repeating-conic-gradient(#d4d0c8 0 25%,#fff 0 50%);background-size:2px 2px"></div>
<div class="raised" style="left:787px;top:138px;width:16px;height:16px;"><svg style="left:0;top:0" width="16" height="16"><path d="M4 9.5 H11 L7.5 6Z" fill="#000"/></svg></div>
<div class="raised" style="left:787px;top:272px;width:16px;height:16px;"><svg style="left:0;top:0" width="16" height="16"><path d="M4 6 H11 L7.5 9.5Z" fill="#000"/></svg></div>
<div class="raised" style="left:787px;top:154px;width:16px;height:54px;"></div>
<div class="etch" style="left:389px;top:302px;width:415px;height:178px;"></div>
<div class="t" style="left:394px;top:297px;font-size:11.5px;transform:scaleX(0.9230);background:#d4d0c8"> Změna údajů o vozidle (karta,Výměna SPZ/tachometru,Vyřazení SPZ) </div>
<svg style="left:397px;top:313px" width="12" height="12"><path d="M10.2 1.8 A6 6 0 0 0 1.8 10.2" fill="none" stroke="#808080"/><path d="M9.5 2.5 A5 5 0 0 0 2.5 9.5" fill="none" stroke="#000" stroke-width="1.2"/><path d="M1.8 10.2 A6 6 0 0 0 10.2 1.8" fill="none" stroke="#fff"/><path d="M2.5 9.5 A5 5 0 0 0 9.5 2.5" fill="none" stroke="#d4d0c8"/><circle cx="6" cy="6" r="4" fill="#fff"/></svg>
<div class="t" style="left:415px;top:313px;font-size:11.5px;transform:scaleX(0.9230);">Povolit operaci u <span class="ul">v</span>šech vozidel</div>
<svg style="left:397px;top:329px" width="12" height="12"><path d="M10.2 1.8 A6 6 0 0 0 1.8 10.2" fill="none" stroke="#808080"/><path d="M9.5 2.5 A5 5 0 0 0 2.5 9.5" fill="none" stroke="#000" stroke-width="1.2"/><path d="M1.8 10.2 A6 6 0 0 0 10.2 1.8" fill="none" stroke="#fff"/><path d="M2.5 9.5 A5 5 0 0 0 9.5 2.5" fill="none" stroke="#d4d0c8"/><circle cx="6" cy="6" r="4" fill="#fff"/><circle cx="6" cy="6" r="2" fill="#000"/></svg>
<div class="t" style="left:415px;top:329px;font-size:11.5px;transform:scaleX(0.9230);">Povolit operaci <span class="ul">p</span>ouze u vybraných vozidel</div>
<div class="sunken" style="left:396px;top:346px;width:400px;height:123px;background:#fff"></div>
<div class="" style="left:400px;top:349px;width:11px;height:11px;background:#fff;border:1px solid #555"><svg style="left:-1px;top:-1px" width="11" height="11"><path d="M2.2 4.6 L4.2 6.6 L8.8 2.2 L8.8 4.8 L4.2 9.2 L2.2 7.2Z" fill="#000"/></svg></div>
<div class="t" style="left:414px;top:348px;font-size:11.5px;transform:scaleX(0.9230);">AKX 65-98 (Ford Mondeo)</div>
<div class="" style="left:400px;top:364px;width:11px;height:11px;background:#fff;border:1px solid #555"><svg style="left:-1px;top:-1px" width="11" height="11"><path d="M2.2 4.6 L4.2 6.6 L8.8 2.2 L8.8 4.8 L4.2 9.2 L2.2 7.2Z" fill="#000"/></svg></div>
<div class="t" style="left:414px;top:363px;font-size:11.5px;transform:scaleX(0.9230);">3S9 14-17 (Škoda Octavia Combi)</div>
<div class="" style="left:400px;top:379px;width:11px;height:11px;background:#fff;border:1px solid #555"><svg style="left:-1px;top:-1px" width="11" height="11"><path d="M2.2 4.6 L4.2 6.6 L8.8 2.2 L8.8 4.8 L4.2 9.2 L2.2 7.2Z" fill="#000"/></svg></div>
<div class="t" style="left:414px;top:378px;font-size:11.5px;transform:scaleX(0.9230);">3A5 77-85 (Renault Clio)</div>
<div class="" style="left:400px;top:394px;width:11px;height:11px;background:#fff;border:1px solid #555"></div>
<div class="t" style="left:414px;top:393px;font-size:11.5px;transform:scaleX(0.9230);">3A5 77-84 (Renault Megane)</div>
<div class="" style="left:400px;top:409px;width:11px;height:11px;background:#fff;border:1px solid #555"><svg style="left:-1px;top:-1px" width="11" height="11"><path d="M2.2 4.6 L4.2 6.6 L8.8 2.2 L8.8 4.8 L4.2 9.2 L2.2 7.2Z" fill="#000"/></svg></div>
<div class="t" style="left:414px;top:408px;font-size:11.5px;transform:scaleX(0.9230);">3A4 15-87 (Škoda Fabia)</div>
<div class="" style="left:400px;top:424px;width:11px;height:11px;background:#fff;border:1px solid #555"><svg style="left:-1px;top:-1px" width="11" height="11"><path d="M2.2 4.6 L4.2 6.6 L8.8 2.2 L8.8 4.8 L4.2 9.2 L2.2 7.2Z" fill="#000"/></svg></div>
<div class="t" style="left:414px;top:423px;font-size:11.5px;transform:scaleX(0.9230);">2S1 33-87 (BMW 5)</div>
<div class="" style="left:413px;top:437px;width:366px;height:15px;background:#0a246a"></div>
<div class="" style="left:400px;top:439px;width:11px;height:11px;background:#fff;border:1px solid #555"></div>
<div class="t" style="left:414px;top:438px;font-size:11.5px;transform:scaleX(0.9230);color:#fff">2A8 11-01 (Škoda Superb)</div>
<div class="" style="left:400px;top:454px;width:11px;height:11px;background:#fff;border:1px solid #555"><svg style="left:-1px;top:-1px" width="11" height="11"><path d="M2.2 4.6 L4.2 6.6 L8.8 2.2 L8.8 4.8 L4.2 9.2 L2.2 7.2Z" fill="#000"/></svg></div>
<div class="t" style="left:414px;top:453px;font-size:11.5px;transform:scaleX(0.9230);">2A4 42-46 (Škoda Fabia)</div>
<div class="" style="left:779px;top:347px;width:16px;height:120px;background-color:#e8e6e2;background-image:repeating-conic-gradient(#d4d0c8 0 25%,#fff 0 50%);background-size:2px 2px"></div>
<div class="raised" style="left:779px;top:347px;width:16px;height:16px;"><svg style="left:0;top:0" width="16" height="16"><path d="M4 9.5 H11 L7.5 6Z" fill="#000"/></svg></div>
<div class="raised" style="left:779px;top:451px;width:16px;height:16px;"><svg style="left:0;top:0" width="16" height="16"><path d="M4 6 H11 L7.5 9.5Z" fill="#000"/></svg></div>
<div class="raised" style="left:779px;top:363px;width:16px;height:50px;"></div>
<div class="" style="left:652px;top:488px;width:73px;height:24px;background:#000"></div>
<div class="raised" style="left:653px;top:489px;width:71px;height:22px;"></div>
<div class="" style="left:657px;top:492px;width:63px;height:16px;border:1px dotted #000"></div>
<div class="t" style="left:682px;top:494px;font-size:11.5px;transform:scaleX(0.8421);">OK</div>
<div class="raised" style="left:732px;top:488px;width:73px;height:24px;"></div>
<div class="t" style="left:754px;top:494px;font-size:11.5px;transform:scaleX(0.8852);">Storno</div>
<div class="t" style="left:10px;top:546px;font-size:11.5px;transform:scaleX(0.9230);">2012</div>
<div class="thin" style="left:40px;top:544px;width:199px;height:16px;"></div>
<div class="t" style="left:45px;top:546px;font-size:11.5px;transform:scaleX(0.9230);">2A4 42-45  Škoda Fabia</div>
<div class="thin" style="left:241px;top:544px;width:66px;height:16px;"></div>
<div class="t" style="left:259px;top:546px;font-size:11.5px;transform:scaleX(0.9230);">42824</div>
<div class="thin" style="left:310px;top:544px;width:131px;height:16px;"></div>
<div class="t" style="left:314px;top:546px;font-size:11.5px;transform:scaleX(0.9230);">Novák Jiří</div>
<div class="thin" style="left:444px;top:544px;width:131px;height:16px;"></div>
<div class="t" style="left:448px;top:546px;font-size:11.5px;transform:scaleX(0.9230);">Administrátor</div>
<div class="thin" style="left:578px;top:544px;width:239px;height:16px;"></div>
<div class="t" style="left:582px;top:546px;font-size:11.5px;transform:scaleX(0.9230);">Novák s.r.o.;  plátce DPH</div>
<svg style="left:820px;top:545px" width="14" height="14"><path d="M12 1 L1 12 M12 5 L5 12 M12 9 L9 12" stroke="#808080" stroke-width="1.2"/><path d="M13 2 L2 13 M13 6 L6 13 M13 10 L10 13" stroke="#fff" stroke-width="1"/></svg></body></html>
